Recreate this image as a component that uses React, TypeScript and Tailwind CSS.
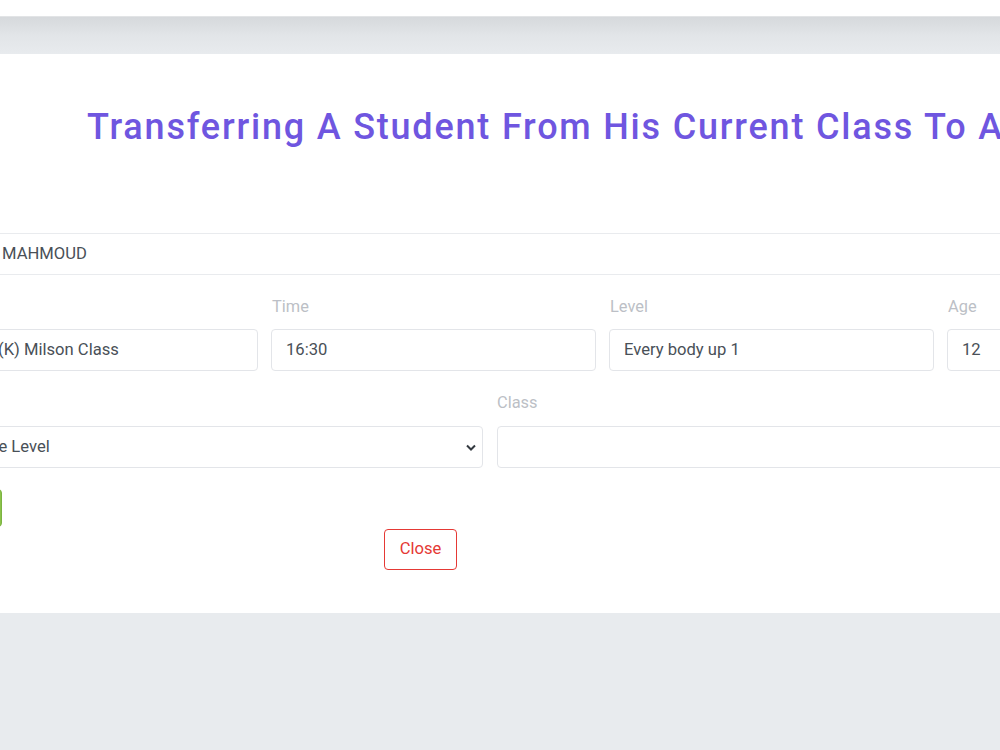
import React from 'react';

const font = { fontFamily: 'Roboto, "Open Sans", Arial, sans-serif' };

function Field({ label, value, pad = 'px-[14px]', hideLabel }: { label: string; value: string; pad?: string; hideLabel?: boolean }) {
  return (
    <div>
      <div className={`h-[24px] text-[16.4px] leading-[24px] text-[#bcbfc6] pl-[1px] ${hideLabel ? 'invisible' : ''}`}>{label}</div>
      <div className={`mt-[10px] h-[42px] rounded-[4px] border border-[#e3e5e9] bg-white flex items-center text-[16.6px] text-[#495057] whitespace-nowrap ${pad}`}>
        {value}
      </div>
    </div>
  );
}

export default function App() {
  return (
    <div className="w-[1000px] h-[750px] overflow-hidden bg-[#e8ebee]" style={font}>
      {/* top strip */}
      <div className="h-[16px] bg-white" />
      <div className="h-[38px] bg-gradient-to-b from-[#d6d9dc] via-[#e2e5e8] to-[#e8ebee] border-t border-[#e2e4e6]" />

      {/* modal body */}
      <div className="h-[559px] bg-white overflow-hidden">
        <div className="ml-[-67px] w-[1338px]">
          <h1 className="pt-[51px] pl-[154px] h-[95px] whitespace-nowrap text-[36px] leading-[44px] font-medium tracking-[1.8px] text-[#6f56e0]">
            Transferring A Student From His Current Class To Another Class
          </h1>

          <div className="mt-[84px] h-[42px] border-y border-[#e9ebee] flex items-center pl-[69px] text-[16.6px] text-[#495057]">
            MAHMOUD
          </div>

          <div className="mt-[20px] grid grid-cols-[325px_325px_325px_325px] gap-x-[13px]">
            <Field label="Class" value="(K) Milson Class" pad="pl-[64px] pr-[14px]" hideLabel />
            <Field label="Time" value="16:30" />
            <Field label="Level" value="Every body up 1" />
            <Field label="Age" value="12" />
          </div>

          <div className="mt-[20px] grid grid-cols-[550px_550px] gap-x-[14px]">
            <div>
              <div className="h-[24px] text-[16px] leading-[24px] text-[#bcbfc6] invisible">Level</div>
              <div className="mt-[11px] h-[42px] rounded-[4px] border border-[#e3e5e9] bg-white pl-[14px] pr-[6px] flex items-center justify-between text-[16.6px] text-[#495057]">
                <span className="ml-[3px] whitespace-nowrap">Choose Level</span>
                <svg width="10" height="7" viewBox="0 0 10 7">
                  <path d="M1 1.5 L5 5.5 L9 1.5" fill="none" stroke="#343a40" strokeWidth="2" />
                </svg>
              </div>
            </div>
            <div>
              <div className="h-[24px] text-[16.4px] leading-[24px] text-[#bcbfc6]">Class</div>
              <div className="mt-[11px] h-[42px] rounded-[4px] border border-[#e3e5e9] bg-white" />
            </div>
          </div>

          <button className="mt-[21px] block w-[69px] h-[38px] rounded-[4px] bg-[#8bc34a] border border-[#7cb342]" />

          <button className="mt-[2px] ml-[451px] block w-[73px] h-[41px] rounded-[4px] border border-[#e53935] bg-white text-[16.6px] text-[#e53935]">
            Close
          </button>
        </div>
      </div>
    </div>
  );
}
